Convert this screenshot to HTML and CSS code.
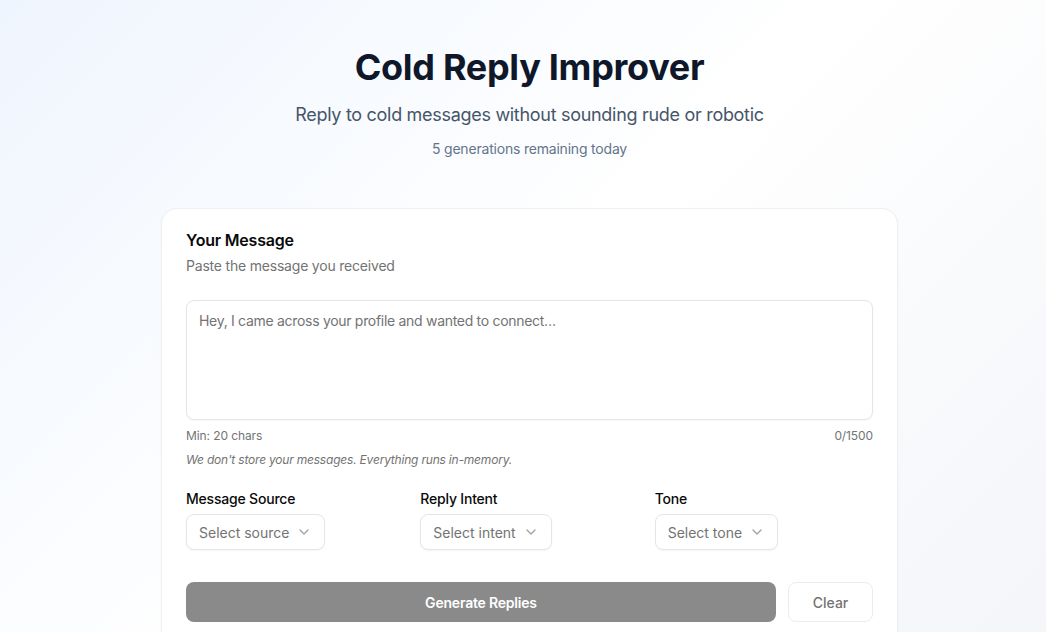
FILE: index.html
```html
<!DOCTYPE html>
<html lang="en">
<head>
<meta charset="utf-8">
<title>Cold Reply Improver</title>
<link rel="stylesheet" href="styles.css">
</head>
<body>
<div class="page">
  <main class="container">
    <header class="hero">
      <h1 class="title">Cold Reply Improver</h1>
      <p class="subtitle">Reply to cold messages without sounding rude or robotic</p>
      <p class="remaining">5 generations remaining today</p>
    </header>
    <section class="card">
      <h2 class="card-title">Your Message</h2>
      <p class="card-desc">Paste the message you received</p>
      <textarea class="message" placeholder="Hey, I came across your profile and wanted to connect…"></textarea>
      <div class="meta">
        <span>Min: 20 chars</span>
        <span>0/1500</span>
      </div>
      <p class="privacy">We don't store your messages. Everything runs in-memory.</p>
      <div class="selects">
        <div class="field">
          <label class="label">Message Source</label>
          <button class="select" type="button">Select source
            <svg class="chev" viewBox="0 0 24 24" width="16" height="16"><path d="M6 9l6 6 6-6"/></svg>
          </button>
        </div>
        <div class="field">
          <label class="label">Reply Intent</label>
          <button class="select" type="button">Select intent
            <svg class="chev" viewBox="0 0 24 24" width="16" height="16"><path d="M6 9l6 6 6-6"/></svg>
          </button>
        </div>
        <div class="field">
          <label class="label">Tone</label>
          <button class="select" type="button">Select tone
            <svg class="chev" viewBox="0 0 24 24" width="16" height="16"><path d="M6 9l6 6 6-6"/></svg>
          </button>
        </div>
      </div>
      <div class="actions">
        <button class="btn-primary" type="button" disabled>Generate Replies</button>
        <button class="btn-outline" type="button">Clear</button>
      </div>
    </section>
  </main>
</div>
</body>
</html>
```
FILE: styles.css
```css
* { box-sizing: border-box; }
html, body { margin: 0; padding: 0; }
body {
  font-family: Inter, "Liberation Sans", sans-serif;
  color: #0a0a0a;
  min-height: 100vh;
  background: linear-gradient(135deg, #eff5fe 0%, #ffffff 50%, #f3f5f9 100%);
  overflow: hidden;
}
.page {
  padding: 0 0 0 13px;
  min-height: 100vh;
}
.container {
  width: 737px;
  margin: 0 auto;
  padding-top: 45px;
}
.hero { text-align: center; }
.title {
  margin: 0;
  font-size: 36px;
  line-height: 44px;
  font-weight: 700;
  color: #0f172a;
  letter-spacing: -0.3px;
}
.subtitle {
  margin: 12px 0 0;
  font-size: 18px;
  line-height: 28px;
  color: #475569;
  letter-spacing: -0.3px;
}
.remaining {
  margin: 10px 0 0;
  font-size: 14px;
  line-height: 20px;
  color: #64748b;
  letter-spacing: -0.2px;
}
.card {
  margin-top: 49px;
  background: #fff;
  border: 1px solid #eef0f3;
  border-radius: 16px;
  padding: 20px 24px 24px;
  box-shadow: 0 1px 3px rgba(15, 23, 42, 0.04);
}
.card-title {
  margin: 0;
  font-size: 16px;
  line-height: 22px;
  font-weight: 600;
  letter-spacing: -0.2px;
}
.card-desc {
  margin: 5px 0 0;
  font-size: 14px;
  line-height: 20px;
  color: #737373;
  letter-spacing: -0.2px;
}
.message {
  display: block;
  width: 100%;
  height: 120px;
  margin-top: 24px;
  padding: 10px 12px;
  border: 1px solid #e5e5e5;
  border-radius: 8px;
  font-family: inherit;
  font-size: 14px;
  line-height: 20px;
  letter-spacing: -0.3px;
  resize: none;
  color: #0a0a0a;
  background: #fff;
  box-shadow: 0 1px 2px rgba(0, 0, 0, 0.04);
}
.message::placeholder { color: #737373; }
.meta {
  display: flex;
  justify-content: space-between;
  margin-top: 8px;
  font-size: 12px;
  line-height: 16px;
  color: #737373;
  letter-spacing: -0.1px;
}
.privacy {
  margin: 8px 0 0;
  font-size: 12px;
  line-height: 16px;
  font-style: italic;
  color: #737373;
  letter-spacing: -0.2px;
}
.selects {
  display: grid;
  grid-template-columns: repeat(3, 1fr);
  gap: 16px;
  margin-top: 22px;
}
.field {
  display: flex;
  flex-direction: column;
  align-items: flex-start;
  gap: 6px;
}
.label {
  font-size: 14px;
  line-height: 18px;
  font-weight: 500;
  letter-spacing: -0.2px;
}
.select {
  display: inline-flex;
  align-items: center;
  gap: 7px;
  height: 36px;
  padding: 0 12px;
  border: 1px solid #e5e5e5;
  border-radius: 8px;
  background: #fff;
  font-family: inherit;
  font-size: 14px;
  color: #737373;
  box-shadow: 0 1px 2px rgba(0, 0, 0, 0.04);
}
.chev {
  fill: none;
  stroke: #a3a3a3;
  stroke-width: 2;
  stroke-linecap: round;
  stroke-linejoin: round;
}
.actions {
  display: flex;
  gap: 12px;
  margin-top: 32px;
}
.btn-primary {
  flex: 1;
  height: 40px;
  border: none;
  border-radius: 8px;
  background: #8a8a8a;
  color: #fff;
  font-family: inherit;
  font-size: 14px;
  font-weight: 600;
  letter-spacing: -0.2px;
}
.btn-outline {
  width: 85px;
  height: 40px;
  border: 1px solid #ececec;
  border-radius: 8px;
  background: #fff;
  color: #737373;
  font-family: inherit;
  font-size: 14px;
  font-weight: 500;
}
```
